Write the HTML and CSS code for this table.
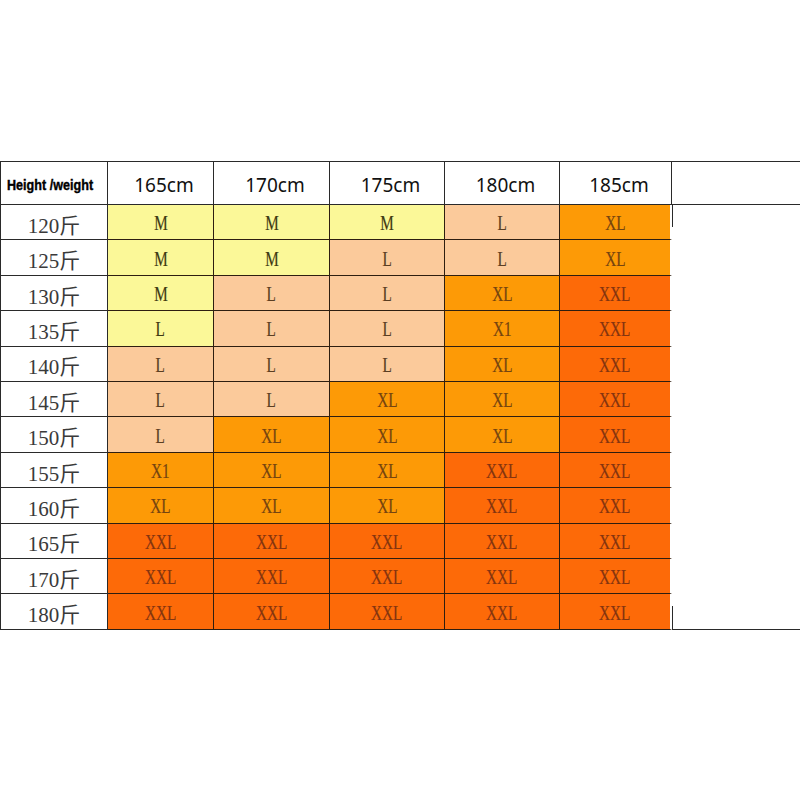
FILE: index.html
```html
<!DOCTYPE html>
<html>
<head>
<meta charset="utf-8">
<link rel="stylesheet" href="styles.css">
</head>
<body>
<div class="chart">
  <div class="hd corner"><span class="narrow">Height /weight</span></div>
  <div class="hd">165cm</div>
  <div class="hd">170cm</div>
  <div class="hd">175cm</div>
  <div class="hd">180cm</div>
  <div class="hd">185cm</div>
  <div class="hd blank"></div>

  <div class="wt">120斤</div>
  <div class="c y"><span>M</span></div><div class="c y"><span>M</span></div><div class="c y"><span>M</span></div><div class="c p"><span>L</span></div><div class="c o last"><span>XL</span></div><div class="e tick-top"></div>

  <div class="wt">125斤</div>
  <div class="c y"><span>M</span></div><div class="c y"><span>M</span></div><div class="c p"><span>L</span></div><div class="c p"><span>L</span></div><div class="c o last"><span>XL</span></div><div class="e"></div>

  <div class="wt">130斤</div>
  <div class="c y"><span>M</span></div><div class="c p"><span>L</span></div><div class="c p"><span>L</span></div><div class="c o"><span>XL</span></div><div class="c r last"><span>XXL</span></div><div class="e"></div>

  <div class="wt">135斤</div>
  <div class="c y"><span>L</span></div><div class="c p"><span>L</span></div><div class="c p"><span>L</span></div><div class="c o"><span>X1</span></div><div class="c r last"><span>XXL</span></div><div class="e"></div>

  <div class="wt">140斤</div>
  <div class="c p"><span>L</span></div><div class="c p"><span>L</span></div><div class="c p"><span>L</span></div><div class="c o"><span>XL</span></div><div class="c r last"><span>XXL</span></div><div class="e"></div>

  <div class="wt">145斤</div>
  <div class="c p"><span>L</span></div><div class="c p"><span>L</span></div><div class="c o"><span>XL</span></div><div class="c o"><span>XL</span></div><div class="c r last"><span>XXL</span></div><div class="e"></div>

  <div class="wt">150斤</div>
  <div class="c p"><span>L</span></div><div class="c o"><span>XL</span></div><div class="c o"><span>XL</span></div><div class="c o"><span>XL</span></div><div class="c r last"><span>XXL</span></div><div class="e"></div>

  <div class="wt">155斤</div>
  <div class="c o"><span>X1</span></div><div class="c o"><span>XL</span></div><div class="c o"><span>XL</span></div><div class="c r"><span>XXL</span></div><div class="c r last"><span>XXL</span></div><div class="e"></div>

  <div class="wt">160斤</div>
  <div class="c o"><span>XL</span></div><div class="c o"><span>XL</span></div><div class="c o"><span>XL</span></div><div class="c r"><span>XXL</span></div><div class="c r last"><span>XXL</span></div><div class="e"></div>

  <div class="wt">165斤</div>
  <div class="c r"><span>XXL</span></div><div class="c r"><span>XXL</span></div><div class="c r"><span>XXL</span></div><div class="c r"><span>XXL</span></div><div class="c r last"><span>XXL</span></div><div class="e"></div>

  <div class="wt">170斤</div>
  <div class="c r"><span>XXL</span></div><div class="c r"><span>XXL</span></div><div class="c r"><span>XXL</span></div><div class="c r"><span>XXL</span></div><div class="c r last"><span>XXL</span></div><div class="e"></div>

  <div class="wt">180斤</div>
  <div class="c r"><span>XXL</span></div><div class="c r"><span>XXL</span></div><div class="c r"><span>XXL</span></div><div class="c r"><span>XXL</span></div><div class="c r last"><span>XXL</span></div><div class="e tick-bottom end"></div>
</div>
</body>
</html>
```

FILE: styles.css
```css
html, body {
  margin: 0;
  padding: 0;
  background: #fff;
}

.chart {
  margin-top: 161px;
  width: 800px;
  display: grid;
  grid-template-columns: 107px 106px 116px 115px 115px 112px 129px;
  grid-template-rows: 43px repeat(12, 35.42px);
  border-top: 1px solid #2a2a2a;
  border-left: 1px solid #2a2a2a;
  box-sizing: border-box;
}

.chart > div {
  box-sizing: border-box;
  display: flex;
  align-items: center;
  justify-content: center;
  padding-top: 3px;
  white-space: nowrap;
}

.hd {
  border-right: 1px solid #2a2a2a;
  border-bottom: 1px solid #2a2a2a;
  font-family: "Noto Sans", "Open Sans", sans-serif;
  font-size: 19px;
  color: #111;
  padding-left: 7px;
}

.hd.corner {
  justify-content: flex-start;
  padding-left: 0;
  overflow: hidden;
}

.narrow {
  display: inline-block;
  font-family: "Liberation Sans", Arial, sans-serif;
  font-weight: 700;
  font-size: 15px;
  color: #000;
  transform: scaleX(0.84);
  transform-origin: left center;
  margin-left: 6px;
  white-space: nowrap;
  -webkit-text-stroke: 0.4px #000;
}

.hd.blank {
  border-right: none;
}

.wt {
  border-right: 1px solid #2a2a2a;
  border-bottom: 1px solid #2a2a2a;
  font-family: "Liberation Serif", "Noto Sans CJK SC", serif;
  font-size: 21px;
  color: #3a3a3a;
}

.c {
  border-right: 1px solid #2e1e10;
  border-bottom: 1px solid #2e1e10;
  font-family: "Liberation Serif", serif;
  font-size: 20px;
}

.c span {
  display: inline-block;
  transform: scaleX(0.76);
  -webkit-text-stroke: 0.2px currentColor;
}

.c.last {
  border-right: 2px solid #fff;
}

.y { background: #fbf898; color: #3e3a12; }
.p { background: #fbca9b; color: #5a3e22; }
.o { background: #fd9a06; color: #744410; }
.r { background: #fd6a08; color: #843410; }

.e {
  background: #fff;
}

.e.tick-top {
  background: linear-gradient(#2a2a2a, #2a2a2a) left top / 1px 22px no-repeat;
}

.e.tick-bottom {
  background: linear-gradient(#2a2a2a, #2a2a2a) left bottom / 1px 23px no-repeat;
}

.e.end {
  border-bottom: 1px solid #2a2a2a;
}
```
